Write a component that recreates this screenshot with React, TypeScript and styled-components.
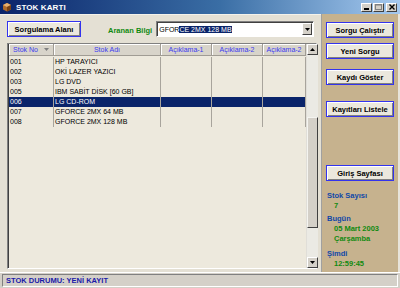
import React from "react";
import styled, { createGlobalStyle } from "styled-components";

const Global = createGlobalStyle`
  html, body { margin: 0; padding: 0; background: #d4d0c8; }
  body { width: 400px; height: 288px; overflow: hidden; font-family: "Liberation Sans", Arial, sans-serif; }
  * { box-sizing: border-box; }
`;

const Window = styled.div`
  width: 400px;
  height: 288px;
  display: flex;
  flex-direction: column;
  background: #d4d0c8;
  overflow: hidden;
`;

const TitleBar = styled.div`
  height: 14px;
  flex: none;
  display: flex;
  align-items: center;
  padding: 0 3px 0 2px;
  background: linear-gradient(90deg, #0a246a 0%, #3a6ea5 55%, #a6caf0 100%);
`;

const TitleText = styled.span`
  color: #fff;
  font-weight: bold;
  font-size: 8px;
  margin-left: 4px;
  flex: 1;
  letter-spacing: 0.1px;
`;

const WinButtons = styled.div`
  display: flex;
  gap: 1px;
`;

const WinBtn = styled.div<{ $gap?: number }>`
  width: 11px;
  height: 9px;
  margin-left: ${(p) => p.$gap ?? 0}px;
  background: #d4d0c8;
  border: 1px solid;
  border-color: #fff #404040 #404040 #fff;
  display: flex;
  align-items: center;
  justify-content: center;
`;

const Body = styled.div`
  flex: 1;
  display: flex;
  min-height: 0;
`;

const LeftArea = styled.div`
  width: 321px;
  flex: none;
  background: #e4e0d4;
  border-top: 1px solid #f4f2ea;
  padding: 6px 0 3px 7px;
  display: flex;
  flex-direction: column;
`;

const TopRow = styled.div`
  height: 16px;
  display: flex;
  align-items: center;
`;

const Btn = styled.button<{ $w: number }>`
  width: ${(p) => p.$w}px;
  height: 16px;
  padding: 0;
  background: #ebe8dd;
  border: 1px solid #3333ee;
  box-shadow: inset 1px 1px 0 #fff, inset -1px -1px 0 #808080;
  font-family: "Liberation Sans", Arial, sans-serif;
  font-weight: bold;
  font-size: 7.5px;
  color: #000;
  cursor: default;
`;

const GreenLabel = styled.span`
  color: #108a10;
  font-weight: bold;
  font-size: 7.5px;
  margin-left: 27px;
  margin-top: 3px;
`;

const Combo = styled.div`
  margin-left: 4px;
  width: 158px;
  height: 16px;
  background: #fff;
  border: 1px solid;
  border-color: #808080 #fff #fff #808080;
  box-shadow: inset 1px 1px 0 #404040;
  display: flex;
  align-items: center;
  padding-left: 2px;
  font-size: 7px;
  color: #000;
`;

const Sel = styled.span`
  background: #0a246a;
  color: #fff;
`;

const ComboText = styled.div`
  flex: 1;
  white-space: nowrap;
`;

const DropBtn = styled.div`
  width: 10px;
  height: 12px;
  margin-right: 1px;
  background: #d4d0c8;
  border: 1px solid;
  border-color: #fff #404040 #404040 #fff;
  display: flex;
  align-items: center;
  justify-content: center;
`;

const Grid = styled.div`
  margin-top: 6px;
  width: 310px;
  height: 227px;
  border: 1px solid;
  border-color: #808080 #fff #fff #808080;
  display: flex;
  background: #ede9dd;
`;

const GridMain = styled.div`
  flex: 1;
  display: flex;
  flex-direction: column;
  border-left: 1px solid #404040;
`;

const HeaderRow = styled.div`
  display: flex;
  height: 12px;
  background: #d8d4ca;
`;

const HeadCell = styled.div<{ $w: number }>`
  width: ${(p) => p.$w}px;
  flex: none;
  border-right: 1px solid #a09c94;
  border-bottom: 1px solid #a09c94;
  box-shadow: inset 1px 1px 0 #fff;
  color: #3b3bf0;
  font-size: 7px;
  display: flex;
  align-items: center;
  justify-content: center;
  gap: 6px;
`;

const Row = styled.div<{ $sel?: boolean }>`
  display: flex;
  height: 10px;
  background: ${(p) => (p.$sel ? "#0a246a" : "transparent")};
  color: ${(p) => (p.$sel ? "#fff" : "#000")};
`;

const Cell = styled.div<{ $w: number }>`
  width: ${(p) => p.$w}px;
  flex: none;
  border-right: 1px solid #a8a49c;
  font-size: 7px;
  line-height: 10px;
  padding-left: 1px;
  white-space: nowrap;
  overflow: hidden;
`;

const ScrollBar = styled.div`
  width: 12px;
  flex: none;
  background: #ebeae4;
  display: flex;
  flex-direction: column;
  border-left: 1px solid #e0ded8;
`;

const ScrollArrow = styled.div`
  height: 11px;
  width: 11px;
  background: #d4d0c8;
  border: 1px solid;
  border-color: #fff #404040 #404040 #fff;
  display: flex;
  align-items: center;
  justify-content: center;
  flex: none;
`;

const Track = styled.div`
  flex: 1;
  display: flex;
  flex-direction: column;
  padding-top: 62px;
  padding-bottom: 29px;
`;

const Thumb = styled.div`
  flex: 1;
  width: 11px;
  background: #d4d0c8;
  border: 1px solid;
  border-color: #f4f4f0 #404040 #404040 #f4f4f0;
`;

const RightPanel = styled.div`
  flex: 1;
  background: #c6b28e;
  border-left: 1px solid #a0a0a0;
  border-right: 2px solid #e8e4da;
  padding: 8px 0 0 4px;
  display: flex;
  flex-direction: column;
`;

const PanelGap = styled.div<{ $h: number }>`
  height: ${(p) => p.$h}px;
  flex: none;
`;

const InfoLabel = styled.div`
  color: #1048a8;
  font-weight: bold;
  font-size: 7.5px;
  line-height: 10px;
  padding-left: 1px;
`;

const InfoValue = styled.div`
  color: #108a10;
  font-weight: bold;
  font-size: 7.5px;
  line-height: 10px;
  padding-left: 8px;
`;

const StatusBar = styled.div`
  height: 16px;
  flex: none;
  border-top: 1px solid #fff;
  padding: 1px 2px 0 2px;
`;

const StatusPanel = styled.div`
  height: 13px;
  border: 1px solid;
  border-color: #808080 #fff #fff #808080;
  display: flex;
  align-items: center;
  padding-left: 3px;
  color: #1a1aa8;
  font-weight: bold;
  font-size: 7.5px;
`;

const Tri = ({ up, color = "#000" }: { up?: boolean; color?: string }) => (
  <svg width="5" height="3" viewBox="0 0 5 3">
    <path d={up ? "M0 3 L5 3 L2.5 0 Z" : "M0 0 L5 0 L2.5 3 Z"} fill={color} />
  </svg>
);

const cols = [45, 107, 51, 51, 43];
const rows = [
  ["001", "HP TARAYICI"],
  ["002", "OKİ LAZER YAZICI"],
  ["003", "LG DVD"],
  ["005", "IBM SABİT DİSK [60 GB]"],
  ["006", "LG CD-ROM"],
  ["007", "GFORCE 2MX 64 MB"],
  ["008", "GFORCE 2MX 128 MB"],
];

export default function App() {
  return (
    <Window>
      <Global />
      <TitleBar>
        <svg width="10" height="10" viewBox="0 0 10 10">
          <path d="M1 3 L5 1 L9 3 L9 7.5 L5 9.5 L1 7.5 Z" fill="#b06a2a" />
          <path d="M1 3 L5 1 L9 3 L5 5 Z" fill="#e8b070" />
          <path d="M5 5 L9 3 L9 7.5 L5 9.5 Z" fill="#7a4214" />
        </svg>
        <TitleText>STOK KARTI</TitleText>
        <WinButtons>
          <WinBtn>
            <svg width="6" height="6" viewBox="0 0 6 6"><rect x="0" y="4" width="5" height="2" fill="#000" /></svg>
          </WinBtn>
          <WinBtn>
            <svg width="7" height="6" viewBox="0 0 7 6"><rect x="0.5" y="0.5" width="6" height="5" fill="none" stroke="#808080" /><rect x="0" y="0" width="7" height="1.5" fill="#808080" /></svg>
          </WinBtn>
          <WinBtn $gap={1}>
            <svg width="6" height="6" viewBox="0 0 6 6"><path d="M0.5 0.5 L5.5 5.5 M5.5 0.5 L0.5 5.5" stroke="#000" strokeWidth="1.4" /></svg>
          </WinBtn>
        </WinButtons>
      </TitleBar>
      <Body>
        <LeftArea>
          <TopRow>
            <Btn $w={74}>Sorgulama Alanı</Btn>
            <GreenLabel>Aranan Bilgi</GreenLabel>
            <Combo>
              <ComboText>
                GFOR<Sel>CE 2MX 128 MB</Sel>
              </ComboText>
              <DropBtn>
                <Tri />
              </DropBtn>
            </Combo>
          </TopRow>
          <Grid>
            <GridMain>
              <HeaderRow>
                <HeadCell $w={cols[0]}>
                  Stok No <Tri color="#808080" />
                </HeadCell>
                <HeadCell $w={cols[1]}>Stok Adı</HeadCell>
                <HeadCell $w={cols[2]}>Açıklama-1</HeadCell>
                <HeadCell $w={cols[3]}>Açıklama-2</HeadCell>
                <HeadCell $w={cols[4]}>Açıklama-2</HeadCell>
              </HeaderRow>
              <PanelGap $h={1} />
              {rows.map(([no, name]) => (
                <Row key={no} $sel={no === "006"}>
                  <Cell $w={cols[0]}>{no}</Cell>
                  <Cell $w={cols[1]}>{name}</Cell>
                  <Cell $w={cols[2]} />
                  <Cell $w={cols[3]} />
                  <Cell $w={cols[4]} />
                </Row>
              ))}
            </GridMain>
            <ScrollBar>
              <ScrollArrow>
                <Tri up />
              </ScrollArrow>
              <Track>
                <Thumb />
              </Track>
              <ScrollArrow>
                <Tri />
              </ScrollArrow>
            </ScrollBar>
          </Grid>
        </LeftArea>
        <RightPanel>
          <Btn $w={68}>Sorgu Çalıştır</Btn>
          <PanelGap $h={5} />
          <Btn $w={68}>Yeni Sorgu</Btn>
          <PanelGap $h={10} />
          <Btn $w={68}>Kaydı Göster</Btn>
          <PanelGap $h={16} />
          <Btn $w={68}>Kayıtları Listele</Btn>
          <PanelGap $h={48} />
          <Btn $w={68}>Giriş Sayfası</Btn>
          <PanelGap $h={10} />
          <InfoLabel>Stok Sayısı</InfoLabel>
          <InfoValue>7</InfoValue>
          <PanelGap $h={3} />
          <InfoLabel>Bugün</InfoLabel>
          <InfoValue>05 Mart 2003</InfoValue>
          <InfoValue>Çarşamba</InfoValue>
          <PanelGap $h={5} />
          <InfoLabel>Şimdi</InfoLabel>
          <InfoValue>12:59:45</InfoValue>
        </RightPanel>
      </Body>
      <StatusBar>
        <StatusPanel>STOK DURUMU: YENİ KAYIT</StatusPanel>
      </StatusBar>
    </Window>
  );
}
